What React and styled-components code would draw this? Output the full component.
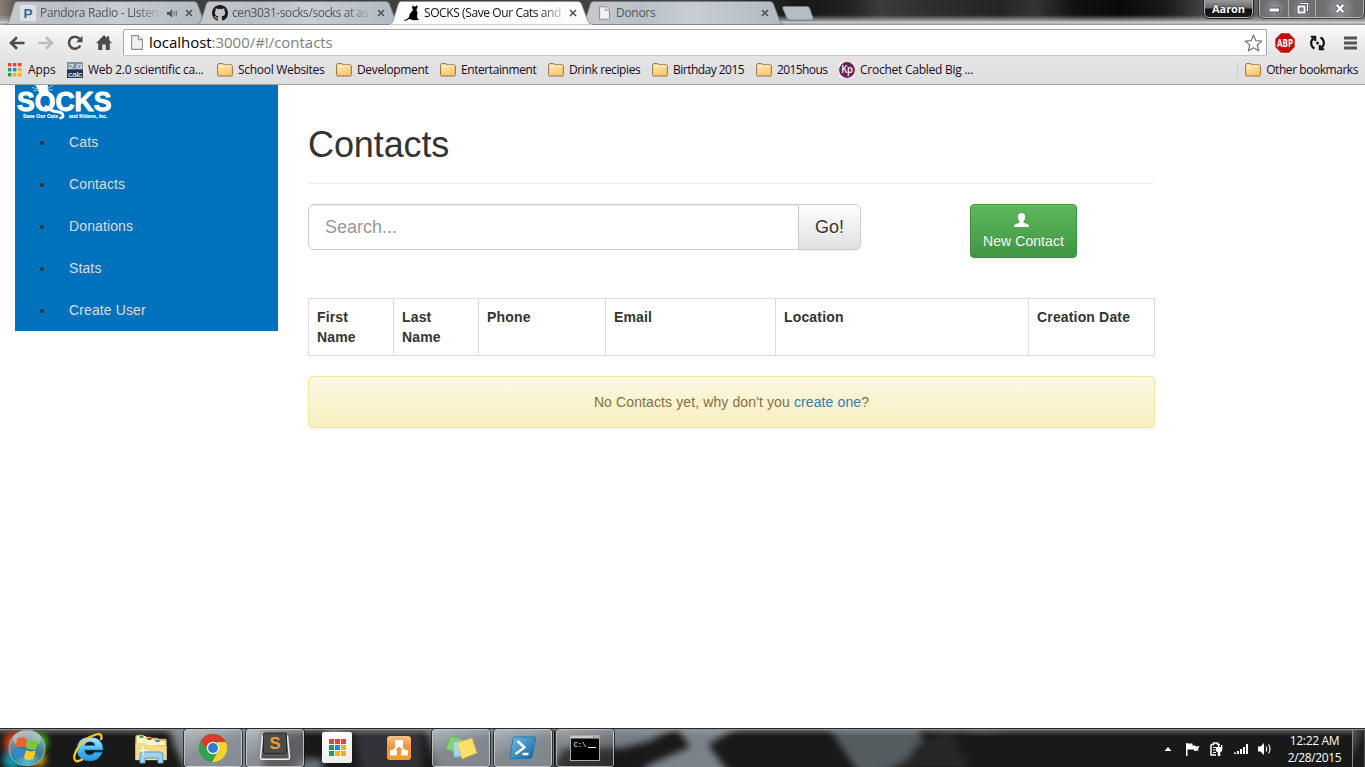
import React from "react";
import styled, { createGlobalStyle, css } from "styled-components";

const GlobalStyle = createGlobalStyle`
  *, *::before, *::after { box-sizing: border-box; }
  html, body { margin: 0; padding: 0; }
  body {
    background: #fff;
    color: #333;
    font: 14px/20px "Liberation Sans", Arial, sans-serif;
    overflow: hidden;
  }
  svg { display: block; flex: none; }
`;

const uiFont = css`
  font-family: "Open Sans", "Noto Sans", sans-serif;
  font-size: 12px;
  line-height: 16px;
  white-space: nowrap;
`;

const Screen = styled.div`
  display: flex;
  flex-direction: column;
  width: 1365px;
  height: 767px;
  overflow: hidden;
`;

/* ---------- title bar and tabs ---------- */

const TitleBar = styled.header`
  ${uiFont}
  position: relative;
  display: flex;
  align-items: flex-start;
  height: 25px;
  padding-left: 8px;
  background:
    linear-gradient(to bottom, transparent 15px, rgba(170, 170, 170, 0.75) 20px, #d6d6d6 23px, #8d8d8d 24px, #a8a8a8 25px),
    linear-gradient(to right, #8a8078 0, #55504c 18px, #3c3c3c 60px, #444 700px, #161616 800px, #222 850px, #3c3c3c 880px, #303030 920px, #242424 1000px, #343434 1035px, #111 1075px, #0a0a0a 1120px, #191919 1165px, #4b4b4b 1210px, #606060 1260px, #646464 1330px, #555 1365px);
`;

const Tab = styled.div`
  position: relative;
  z-index: ${(p) => (p.$active ? 2 : 1)};
  display: flex;
  align-items: center;
  flex: none;
  width: 192px;
  height: 25px;
  padding: 1px 7px 0 12px;
  color: ${(p) => (p.$active ? "#111" : "#555")};
`;

const TabShape = styled.svg`
  position: absolute;
  left: -3px;
  top: 0;
  z-index: -1;
`;

const TabTitle = styled.span`
  margin-left: 4px;
  letter-spacing: ${(p) => p.$track || 0}px;
  mask-image: ${(p) => (p.$fade ? "linear-gradient(to right, #000 calc(100% - 22px), rgba(0, 0, 0, 0.2))" : "none")};
`;

const TabSpacer = styled.span`
  flex: 1;
`;

const TabAudio = styled.span`
  display: flex;
  margin-right: 7px;
`;

const FaviconSlot = styled.span`
  display: flex;
  width: 16px;
  padding-left: 3px;
`;

const NewTab = styled.svg`
  margin: 6px 0 0 5px;
`;

const WindowControls = styled.div`
  display: flex;
  align-items: flex-start;
  margin-left: auto;
`;

const UserBadge = styled.div`
  display: flex;
  justify-content: center;
  width: 49px;
  height: 18px;
  margin-right: 6px;
  border: 1px solid #b6b6b6;
  border-top: 0;
  border-radius: 0 0 5px 5px;
  outline: 1px solid #222;
  background: linear-gradient(#9a9a9a 0, #6a6a6a 8px, #101010 9px, #1d1d1d 100%);
  color: #fff;
  font-size: 11px;
  font-weight: 700;
  line-height: 17px;
  letter-spacing: -0.1px;
  text-shadow: 0 0 2px #000;
`;

const ControlGroup = styled.div`
  display: flex;
  height: 18px;
  margin-right: 1px;
  border: 1px solid #b0b0b0;
  border-top: 0;
  border-radius: 0 0 5px 5px;
  background: rgba(115, 115, 115, 0.75);
  outline: 1px solid rgba(30, 30, 30, 0.6);
`;

const Control = styled.div`
  display: flex;
  align-items: center;
  justify-content: center;
  width: ${(p) => p.$width}px;
  padding-top: ${(p) => p.$drop || 0}px;
  border-right: 1px solid rgba(210, 210, 210, 0.6);
  background: radial-gradient(circle at 50% 50%, rgba(230, 230, 240, 0.35), transparent 65%);
  &:last-child { border-right: 0; }
`;

/* ---------- toolbar ---------- */

const Chrome = styled.div`
  ${uiFont}
  display: flex;
  flex-direction: column;
  height: 60px;
  padding-top: 4px;
  border-bottom: 1px solid #a3a3a3;
  background: linear-gradient(#fbfbfb 0, #f0f0f0 14px, #e4e4e4 32px, #dedede 100%);
`;

const AddressRow = styled.div`
  display: flex;
  align-items: center;
  height: 27px;
  padding-left: 9px;
`;

const NavIcon = styled.span`
  display: flex;
  width: 29px;
`;

const Omnibox = styled.div`
  display: flex;
  align-items: center;
  width: 1144px;
  height: 27px;
  margin-left: -2px;
  padding: 0 3px 0 7px;
  border: 1px solid #a9a9a9;
  border-bottom-color: #c2c2c2;
  border-radius: 2px;
  background: #fff;
`;

const Url = styled.span`
  flex: 1;
  margin: -2px 0 0 6px;
  font-size: 15px;
  line-height: 22px;
  letter-spacing: -0.03px;
  color: #808080;
  b { color: #000; font-weight: 400; }
`;

const ExtIcons = styled.div`
  display: flex;
  align-items: center;
  gap: 15px;
  margin-left: 8px;
`;

const MenuIcon = styled.svg`
  margin-left: 4px;
`;

const Bookmarks = styled.nav`
  display: flex;
  align-items: center;
  height: 28px;
  padding: 0 7px 0 8px;
`;

const Bookmark = styled.div`
  display: flex;
  align-items: center;
  flex: none;
  gap: ${(p) => p.$gap ?? 5}px;
  width: ${(p) => (p.$width ? `${p.$width}px` : "auto")};
  color: #1a0a1a;
  letter-spacing: ${(p) => p.$track || 0}px;
`;

const OtherBookmarks = styled.div`
  display: flex;
  align-items: center;
  height: 16px;
  margin-left: auto;
  padding-left: 7px;
  border-left: 1px solid #c3cdd6;
`;

/* ---------- page ---------- */

const Page = styled.div`
  display: flex;
  flex: 1;
  align-items: flex-start;
  min-height: 0;
  padding-left: 15px;
  overflow: hidden;
`;

const Sidebar = styled.aside`
  width: 263px;
  height: 246px;
  background: #0071bc;
`;

const NavList = styled.ul`
  margin: 0;
  padding: 0 0 0 40px;
  list-style: disc;
`;

const NavItem = styled.li`
  height: 42px;
  padding: 11px 14px;
  line-height: 20px;
  color: #333;
`;

const NavLink = styled.a`
  color: #ddd;
  letter-spacing: 0.12px;
`;

const Main = styled.main`
  width: 847px;
  margin-left: 30px;
`;

const PageHeader = styled.div`
  height: 99px;
  margin-bottom: 20px;
  padding-top: 40px;
  border-bottom: 1px solid #eee;
`;

const Heading = styled.h1`
  margin: 0;
  font-size: 36px;
  font-weight: 400;
  line-height: 39.6px;
  letter-spacing: -0.1px;
`;

const ActionRow = styled.div`
  display: flex;
  align-items: flex-start;
  height: 94px;
`;

const SearchInput = styled.input`
  width: 491px;
  height: 46px;
  padding: 10px 16px;
  border: 1px solid #ccc;
  border-radius: 6px 0 0 6px;
  box-shadow: inset 0 1px 1px rgba(0, 0, 0, 0.075);
  font: 18px/24px "Liberation Sans", Arial, sans-serif;
  &::placeholder { color: #999; opacity: 1; }
`;

const GoButton = styled.button`
  width: 63px;
  height: 46px;
  margin-left: -1px;
  padding: 0;
  border: 1px solid #ccc;
  border-radius: 0 6px 6px 0;
  background: linear-gradient(#fff, #e0e0e0);
  box-shadow: inset 0 1px 0 rgba(255, 255, 255, 0.15), 0 1px 1px rgba(0, 0, 0, 0.075);
  color: #333;
  font: 18px/24px "Liberation Sans", Arial, sans-serif;
  text-shadow: 0 1px 0 #fff;
`;

const NewContact = styled.button`
  display: flex;
  flex-direction: column;
  align-items: center;
  width: 107px;
  height: 54px;
  margin-left: 109px;
  padding: 8px 0 0;
  border: 1px solid #3e8f3e;
  border-radius: 4px;
  background: linear-gradient(#5cb85c, #419641);
  box-shadow: inset 0 1px 0 rgba(255, 255, 255, 0.15), 0 1px 1px rgba(0, 0, 0, 0.075);
  color: #fff;
  font: 14px/20px "Liberation Sans", Arial, sans-serif;
  letter-spacing: 0.08px;
  text-shadow: 0 -1px 0 rgba(0, 0, 0, 0.2);
  white-space: nowrap;
  svg { margin: 0 4px 4px 0; }
`;

const Table = styled.table`
  width: 847px;
  height: 58px;
  border-collapse: collapse;
  table-layout: fixed;
`;

const Th = styled.th`
  width: ${(p) => p.$width}px;
  padding: 8px;
  border: 1px solid #ddd;
  text-align: left;
  vertical-align: top;
  letter-spacing: 0.16px;
`;

const Alert = styled.div`
  height: 52px;
  margin-top: 20px;
  padding: 15px;
  border: 1px solid #f5e79e;
  border-radius: 4px;
  background: linear-gradient(#fcf8e3, #f8efc0);
  box-shadow: inset 0 1px 0 rgba(255, 255, 255, 0.25), 0 1px 2px rgba(0, 0, 0, 0.05);
  color: #8a6d3b;
  text-align: center;
  letter-spacing: 0.115px;
  text-shadow: 0 1px 0 rgba(255, 255, 255, 0.2);
  a { color: #337ab7; }
`;

/* ---------- taskbar ---------- */

const Taskbar = styled.footer`
  ${uiFont}
  position: relative;
  z-index: 0;
  display: flex;
  height: 39px;
  border-top: 1px solid #26282a;
  background: #191919;
  overflow: hidden;
`;

const TaskbarGlass = styled.svg`
  position: absolute;
  left: 0;
  top: 0;
  z-index: -1;
`;

const StartSlot = styled.div`
  width: 60px;
`;

const TaskSlot = styled.div`
  display: flex;
  align-items: center;
  justify-content: center;
  width: 58px;
  height: 38px;
  margin-right: 4px;
  ${(p) =>
    p.$open &&
    css`
      border: 1px solid rgba(225, 225, 225, 0.65);
      border-radius: 3px;
      outline: 1px solid rgba(15, 15, 15, 0.7);
      background: ${p.$dark
        ? "linear-gradient(160deg, rgba(190,190,190,.5), rgba(110,110,110,.35) 50%, rgba(60,60,60,.6))"
        : "linear-gradient(160deg, rgba(215,220,225,.6), rgba(150,155,160,.55) 50%, rgba(140,145,150,.6))"};
      box-shadow: ${p.$stack ? "3px 0 0 -1px #777, 4px 0 0 -1px #151515" : "none"};
    `}
`;

const Tray = styled.div`
  display: flex;
  align-items: center;
  margin-left: auto;
  padding-top: 1px;
`;

const Clock = styled.div`
  width: 75px;
  margin-left: 4px;
  color: #fff;
  line-height: 17px;
  text-align: center;
  letter-spacing: -0.35px;
`;

const ShowDesktop = styled.div`
  width: 13px;
  margin-top: 1px;
  border-left: 1px solid #888;
  border-right: 1px solid #555;
  background: linear-gradient(115deg, #5a5a5a, #1c1c1c 55%);
`;

/* ---------- small drawings ---------- */

const FolderIcon = () => (
  <svg width="16" height="14" viewBox="0 0 16 14">
    <defs>
      <linearGradient id="fold" x1="0" y1="0" x2="0.4" y2="1">
        <stop offset="0" stopColor="#ffeab8" />
        <stop offset="1" stopColor="#fbc870" />
      </linearGradient>
    </defs>
    <path d="M.6 11.800V2.400q0-1.800 1.400-1.800h3.600q1 0 1.300 1.200h7q1.500 0 1.500 1.500v8.500q0 1.200-1.200 1.200H1.800Q.6 13 .6 11.800z" fill="url(#fold)" stroke="#96703d" strokeWidth="1" />
    <path d="M1.500 3.800h4.800l1-1h7" fill="none" stroke="#fff5d8" />
  </svg>
);

const PageIcon = ({ w = 12, h = 15 }) => (
  <svg width={w} height={h} viewBox="0 0 12 15">
    <path d="M.6.6h6.800l4 4v9.800H.6z" fill="#f1f1f1" stroke="#909090" strokeWidth="1.1" />
    <path d="M7.400.6v4h4" fill="#fff" stroke="#909090" strokeWidth="1.1" />
  </svg>
);

const CloseIcon = () => (
  <svg width="8" height="8" viewBox="0 0 8 8">
    <path d="M1 1l6 6M7 1L1 7" stroke="#555" strokeWidth="1.7" />
  </svg>
);

const DotGrid = ({ size, dot, step }) => {
  const colors = ["#ea4335", "#ea4335", "#ea4335", "#1a9f56", "#1a8be8", "#f4b400", "#1a9f56", "#f4b400", "#f4b400"];
  return (
    <svg width={size} height={size}>
      {colors.map((c, i) => (
        <rect key={i} x={(i % 3) * step} y={Math.floor(i / 3) * step} width={dot} height={dot} fill={c} />
      ))}
    </svg>
  );
};

const PandoraIcon = () => (
  <svg width="16" height="16" viewBox="0 0 16 16">
    <rect width="16" height="16" rx="1.5" fill="#dfe3e8" />
    <text x="3.400" y="12.600" fontFamily="Liberation Sans, sans-serif" fontWeight="700" fontSize="13.500" fill="#2b6699">P</text>
  </svg>
);

const GithubIcon = () => (
  <svg width="16" height="16" viewBox="0 0 16 16">
    <path fill="#1b1b1b" d="M8 0C3.58 0 0 3.58 0 8c0 3.54 2.29 6.53 5.47 7.59.4.07.55-.17.55-.38 0-.19-.01-.82-.01-1.49-2.01.37-2.53-.49-2.69-.94-.09-.23-.48-.94-.82-1.13-.28-.15-.68-.52-.01-.53.63-.01 1.08.58 1.23.82.72 1.21 1.87.87 2.33.66.07-.52.28-.87.51-1.07-1.78-.2-3.64-.89-3.64-3.95 0-.87.31-1.59.82-2.15-.08-.2-.36-1.02.08-2.12 0 0 .67-.21 2.2.82a7.6 7.6 0 0 1 4 0c1.53-1.04 2.2-.82 2.2-.82.44 1.1.16 1.92.08 2.12.51.56.82 1.27.82 2.15 0 3.07-1.87 3.75-3.65 3.95.29.25.54.73.54 1.48 0 1.07-.01 1.93-.01 2.2 0 .21.15.46.55.38A8 8 0 0 0 16 8c0-4.42-3.58-8-8-8z" />
  </svg>
);

const CatIcon = () => (
  <svg width="16" height="16" viewBox="0 0 16 16">
    <path d="M8.600.2l1.300 1.200h1.700L13.200.1l.3 2.700-1.100 1.800 1.100 3.200-.4 3.800.4 2 1.300.6-.2.900-5.400.1-3.300-1.200q-1.700.1-2.600 1.100-1.300 1.200-3.100.5l.1-1.100q1.500.5 2.900-.7l1.600-1.300Q5.400 8.600 7.300 7.100q1.500-1.200 1.600-2.800L8.100 2.900z" fill="#000" />
  </svg>
);

const AudioIcon = () => (
  <svg width="11" height="9" viewBox="0 0 11 9">
    <path d="M0 3h2.200L5.200.300v8.400L2.200 6H0z" fill="#555" />
    <path d="M7 2.500v4M9.300 1.500v6" stroke="#666" strokeWidth="1" />
  </svg>
);

const tabPath = (w) => `M0 24.500Q3 24 4 21L9.500 3.500Q10.300 1.500 12.500 1.500H${w - 15}Q${w - 12.5} 1.500 ${w - 11.5} 4L${w - 5} 21.500Q${w - 4} 24 ${w - 1} 24.500z`;

const BrowserTab = ({ active, icon, title, audio, fade, track }) => (
  <Tab $active={active}>
    <TabShape width="208" height="26" viewBox="0 0 208 26">
      <defs>
        <linearGradient id="tabOff" x1="0" y1="0" x2="1" y2="0">
          <stop offset="0" stopColor="#c7c9cb" />
          <stop offset="0.3" stopColor="#b9c0c9" />
          <stop offset="0.55" stopColor="#c9ced4" />
          <stop offset="1" stopColor="#b1b8c1" />
        </linearGradient>
        <linearGradient id="tabOn" x1="0" y1="0" x2="0" y2="1">
          <stop offset="0" stopColor="#fff" />
          <stop offset="1" stopColor="#fbfbfb" />
        </linearGradient>
      </defs>
      <path d={tabPath(204)} fill={active ? "url(#tabOn)" : "url(#tabOff)"} stroke={active ? "#909090" : "#777a7e"} strokeWidth="0.8" />
      {active && <path d="M1 25.200H203" stroke="#fbfbfb" strokeWidth="1.400" />}
    </TabShape>
    {icon}
    <TabTitle $fade={fade} $track={track}>{title}</TabTitle>
    <TabSpacer />
    {audio && <TabAudio><AudioIcon /></TabAudio>}
    <CloseIcon />
  </Tab>
);

const CalcIcon = () => (
  <svg width="16" height="16" viewBox="0 0 16 16">
    <rect width="16" height="16" fill="#263545" />
    <rect width="16" height="7.500" fill="#8295a5" />
    <text x="1" y="6.700" fontSize="8" textLength="14" lengthAdjust="spacingAndGlyphs" fontFamily="Liberation Sans, sans-serif" fill="#fff">2.0</text>
    <text x="1" y="14.500" fontSize="8" textLength="14" lengthAdjust="spacingAndGlyphs" fontFamily="Liberation Sans, sans-serif" fill="#fff">calc</text>
  </svg>
);

const KpIcon = () => (
  <svg width="16" height="16" viewBox="0 0 16 16">
    <rect width="16" height="16" fill="#f6eef4" />
    <circle cx="8" cy="8" r="7.900" fill="#6d1f5c" />
    <text x="2.300" y="11.200" fontSize="10" fontWeight="600" textLength="11.500" lengthAdjust="spacingAndGlyphs" fontFamily="Open Sans, sans-serif" fill="#fff">Kp</text>
  </svg>
);

const SocksLogo = () => (
  <svg width="110" height="36" viewBox="0 0 110 36">
    <g fill="#fff" fontFamily="Liberation Sans, sans-serif" fontWeight="700">
      <path d="M20 0h13l-.5 4.500 2.500 3-5 2-6.500-2-.5-3.500z" />
      <path d="M17 2.500l6 1.500M18 6l5-1M38 .5l-6 3M38 5l-6-.5" stroke="#fff" strokeWidth=".6" />
      <text x="2" y="26" fontSize="27.500" textLength="94.500" lengthAdjust="spacingAndGlyphs" stroke="#fff" strokeWidth="1" strokeLinejoin="round">SOCKS</text>
      <path d="M31 21.500q4 4.500 10 5 7 .8 7 4 0 2-2.500 2.500" fill="none" stroke="#fff" strokeWidth="2.800" strokeLinecap="round" />
      <text x="8" y="32.700" fontSize="6" textLength="35" lengthAdjust="spacingAndGlyphs" stroke="#fff" strokeWidth=".15">Save Our Cats</text>
      <text x="54" y="32.700" fontSize="6" textLength="38.500" lengthAdjust="spacingAndGlyphs" stroke="#fff" strokeWidth=".15">and Kittens, Inc.</text>
    </g>
  </svg>
);

/* ---------- taskbar drawings ---------- */

const StartOrb = () => (
  <svg width="60" height="38" viewBox="0 0 60 38">
    <defs>
      <radialGradient id="orb" cx=".5" cy=".9" r=".9">
        <stop offset="0" stopColor="#5bd8e8" />
        <stop offset=".45" stopColor="#2a7da4" />
        <stop offset="1" stopColor="#a9b8be" />
      </radialGradient>
      <filter id="glow" x="-50%" y="-50%" width="200%" height="200%"><feGaussianBlur stdDeviation="3.200" /></filter>
    </defs>
    <g filter="url(#glow)">
      <circle cx="14" cy="13" r="10" fill="#d83c14" />
      <circle cx="39" cy="13" r="9" fill="#3fae23" />
      <circle cx="13" cy="31" r="10" fill="#1993a8" />
      <circle cx="38" cy="30" r="8" fill="#bd941b" />
    </g>
    <circle cx="27" cy="19" r="18" fill="url(#orb)" stroke="#b6c6c9" strokeWidth=".8" opacity=".85" />
    <ellipse cx="27" cy="10" rx="14" ry="8" fill="#fff" opacity=".32" />
    <g transform="translate(0 -1)">
      <path d="M17.500 10.500q5-2.500 9.500.5l-2 9q-5-2.500-9.800-.5z" fill="#f0622a" />
      <path d="M28.300 11.500q5 2.600 10.200.3l-2.400 9.100q-5 2-10-.6z" fill="#83c23d" />
      <path d="M15 21q5-2.200 9.800.4l-2.200 8.500q-5-2.400-9.600-.5z" fill="#3188cf" />
      <path d="M25.900 22q5 2.500 9.900.6l-2.300 8.500q-5 2-9.700-.7z" fill="#fdc72d" />
    </g>
  </svg>
);

const IEIcon = () => (
  <svg width="34" height="32" viewBox="0 0 34 32">
    <defs>
      <linearGradient id="ie" x1="0" y1="0" x2="0" y2="1">
        <stop offset="0" stopColor="#b9efff" />
        <stop offset=".5" stopColor="#49bdf2" />
        <stop offset="1" stopColor="#2393dd" />
      </linearGradient>
    </defs>
    <path d="M31 18H12.500q.5 5 5.300 5 3.200 0 4.700-2.800h7.800Q27 29 17.800 29 5 28.500 5 17 5.500 5.500 17.500 5.200 31 5.200 31 18zM23 13.500q-.5-3.800-4.900-3.800-4.600 0-5.500 3.800z" fill="url(#ie)" stroke="#1674bd" strokeWidth=".6" />
    <path d="M29 8Q31 1 24 2.500 12 6 5 17 0 27 4 29q2 1 7-2" fill="none" stroke="#f7c62c" strokeWidth="2.300" />
  </svg>
);

const ExplorerIcon = () => (
  <svg width="34" height="32" viewBox="0 0 34 32">
    <path d="M1.500 5q0-2 2-2h6l1 2h6l1 1h6l1 1h7q1 0 1 2v19h-31z" fill="#e3c872" stroke="#b8953f" strokeWidth=".5" />
    <path d="M3 4h9v3h8v2h11v4H3z" fill="#fff4cc" />
    <path d="M5.500 4h4v2h-4z" fill="#37a548" />
    <path d="M13.500 6h4v2h-4z" fill="#c33" />
    <path d="M21.500 8h4v2h-4z" fill="#278ecb" />
    <path d="M1.500 11h9l2 2h8l1.500 1.500h10.500V28h-31z" fill="#f2db8e" />
    <path d="M6 31V23q0-3 3-3h17q3 0 3 3v8h-5v-5H11v5z" fill="#a0d3ef" stroke="#5c9cc3" />
    <path d="M9 14v9M4.500 18.500h9" stroke="#fff" strokeWidth="1" />
  </svg>
);

const ChromeIcon = () => (
  <svg width="30" height="30" viewBox="0 0 30 30">
    <circle cx="15" cy="15" r="14.200" fill="#31a350" />
    <path d="M2.700 8A14.200 14.200 0 0 1 27.800 9H15a6 6 0 0 0-5.700 4.500L8.600 16z" fill="#dc3b2c" />
    <path d="M27.800 9A14.200 14.200 0 0 1 14 29.200L20.200 18Q22 14 19 9z" fill="#fbd031" />
    <circle cx="15" cy="15" r="6.300" fill="#f4f4f4" />
    <circle cx="15" cy="15" r="4.900" fill="#3478c9" />
  </svg>
);

const SublimeIcon = () => (
  <svg width="32" height="32" viewBox="0 0 32 32">
    <path d="M3.500 4L1.500 26q0 1.300 1.300 1.300h26.400q1.300 0 1.300-1.300L28.500 4z" fill="#555" stroke="#f2f2f2" strokeWidth="1.500" />
    <rect x="4.500" y="1" width="23" height="20.500" rx="1.500" fill="#4b4b4b" stroke="#282828" />
    <text x="10.500" y="17" fontSize="16.500" fontWeight="700" fontFamily="Liberation Sans, sans-serif" fill="#f59b35">S</text>
  </svg>
);

const AppsTile = styled.div`
  display: flex;
  align-items: center;
  justify-content: center;
  width: 30px;
  height: 31px;
  margin-bottom: 2px;
  border-radius: 2px;
  background: linear-gradient(#fff, #ededed);
`;

const VmIcon = () => (
  <svg width="24" height="24" viewBox="0 0 24 24">
    <defs>
      <linearGradient id="vm" x1="0" y1="0" x2="0" y2="1">
        <stop offset="0" stopColor="#f7c08d" />
        <stop offset=".5" stopColor="#f0913b" />
        <stop offset="1" stopColor="#f7a022" />
      </linearGradient>
    </defs>
    <rect width="24" height="24" rx="3" fill="url(#vm)" />
    <path d="M8 4h8v7H8zM3 14h7v5.500H3zM14 14h7v5.500h-7z" fill="#fff" />
    <path d="M11 10l-5 5M13 10l5 5" stroke="#fff" strokeWidth="2" />
  </svg>
);

const NotesIcon = () => (
  <svg width="34" height="28" viewBox="0 0 34 28">
    <path d="M7 2l13 4-5 14L2 15z" fill="#83d46b" stroke="#5fae52" strokeWidth=".5" />
    <path d="M9 8l13-2 3 16-15 1z" fill="#a5d6f8" stroke="#6ba9d8" strokeWidth=".5" />
    <path d="M13 9l15-5 5 15-15 6z" fill="#fbe069" stroke="#d6b13c" strokeWidth=".5" />
  </svg>
);

const PowerShellIcon = () => (
  <svg width="30" height="24" viewBox="0 0 30 24">
    <defs>
      <linearGradient id="ps" x1="0" y1="0" x2="1" y2="1">
        <stop offset="0" stopColor="#74bfe6" />
        <stop offset="1" stopColor="#10609f" />
      </linearGradient>
    </defs>
    <path d="M6.500 1h20q1.500 0 1.200 1.500L24 21q-.4 1.500-2 1.500H3q-1.500 0-1.200-1.500L5 2.300Q5.300 1 6.500 1z" fill="url(#ps)" stroke="#2476ae" />
    <path d="M9.500 5l7 6.500-9 6.500M14.500 18h6" fill="none" stroke="#fff" strokeWidth="2.400" />
  </svg>
);

const CmdIcon = () => (
  <svg width="30" height="26" viewBox="0 0 30 26">
    <rect x=".5" y=".5" width="29" height="25" fill="#000" stroke="#aaa" />
    <rect x="1" y="1" width="28" height="2.500" fill="#c9c9c9" />
    <path d="M23 2h1M25.500 2h1M28 2h.6" stroke="#444" />
    <text x="3.500" y="12" fontSize="8" fontFamily="Liberation Mono, monospace" fill="#eee" textLength="13">C:\</text>
    <path d="M18 12.500h8" stroke="#eee" strokeWidth="1" />
  </svg>
);

const TrayIcons = () => (
  <svg width="110" height="20" viewBox="1163 739 110 20" fill="#fff">
    <path d="M1164.500 751l3.500-4 3.500 4z" />
    <path d="M1186 743h1.500v13h-1.500zM1187.500 743.500h5v2h2.500l1 1 3.500-.5-1.500 3 .5 1.500-4 .5-1-1.500h-6z" />
    <path d="M1211 744.500h2.500v-1.500h4v1.500h2.500M1211 744.500v10.500h5" fill="none" stroke="#fff" strokeWidth="1.500" />
    <path d="M1213 747.500h3.500M1213 750h2.500M1213 752.500h3" stroke="#fff" />
    <path d="M1216 747h2v-2h1.300v2h1.700v-2h1.300v2v3q0 2-2 2v4h-2.500v-4q-2 0-2-2z" />
    <path d="M1234 752.500h2v1.500h-2zM1237 751h2v3h-2zM1240 749h2v5h-2zM1243 747h2v7h-2zM1246 744h2v10h-2z" />
    <path d="M1258 746.500h2.500l3.500-3.500v12l-3.500-3.500h-2.500z" />
    <path d="M1266 746.500q1.500 2.500 0 5M1268.500 744.500q3 4.500 0 9" fill="none" stroke="#fff" strokeWidth="1.100" />
  </svg>
);

const Glass = () => (
  <TaskbarGlass width="1365" height="38" viewBox="0 729 1365 38">
    <defs>
      <filter id="soft" x="-5%" y="-50%" width="110%" height="200%"><feGaussianBlur stdDeviation="3.500" /></filter>
      <linearGradient id="edge" x1="0" y1="0" x2="0" y2="1">
        <stop offset="0" stopColor="#aaa" stopOpacity=".55" />
        <stop offset="1" stopColor="#aaa" stopOpacity="0" />
      </linearGradient>
    </defs>
    <rect y="729" width="1365" height="38" fill="#191919" />
    <g filter="url(#soft)">
      <path d="M168 725h95v50h-75l-14-30z" fill="#7b838b" />
      <path d="M300 759h22v14h-30zM325 725h28l-22 14z" fill="#69727a" />
      <path d="M352 725h70v50h-60z" fill="#303338" />
      <path d="M425 725h130l10 20-15 30H440z" fill="#6d747a" />
      <path d="M555 725h125l-30 16-28 7h-60z" fill="#777f87" />
      <path d="M675 725h65l-32 20 24 32h-94l10-12 42-18z" fill="#7b838b" />
      <path d="M827 725h90l8 22-32 22-30 10z" fill="#555b61" />
      <path d="M940 725h70l-22 8z" fill="#34373a" />
      <path d="M915 745l35-15 22 40h-70z" fill="#272727" />
    </g>
    <rect y="729" width="1365" height="7" fill="url(#edge)" />
    <rect y="729" width="1365" height="1" fill="#8f9193" />
  </TaskbarGlass>
);

/* ---------- data ---------- */

const folders = [
  ["School Websites", 119, -0.3],
  ["Development", 104, -0.35],
  ["Entertainment", 108, -0.42],
  ["Drink recipies", 104, -0.38],
  ["Birthday 2015", 104, -0.52],
  ["2015hous", 83, -0.6],
];
const navItems = ["Cats", "Contacts", "Donations", "Stats", "Create User"];
const columns = [["First Name", 85], ["Last Name", 85], ["Phone", 127], ["Email", 170], ["Location", 253], ["Creation Date", 126]];

const WindowButtons = () => (
  <ControlGroup>
    <Control $width={29} $drop={3}>
      <svg width="13" height="6"><rect x="1" y="1" width="10.500" height="4" fill="#fff" stroke="#555b72" /></svg>
    </Control>
    <Control $width={27}>
      <svg width="13" height="13" viewBox="0 0 13 13">
        <path d="M4.500 1.500h7v7h-2" fill="none" stroke="#50566c" strokeWidth="2.400" />
        <path d="M4.500 1.500h7v7h-2" fill="none" stroke="#fff" strokeWidth="1.200" />
        <rect x="2.500" y="4.500" width="6" height="6" fill="none" stroke="#50566c" strokeWidth="3.600" />
        <rect x="2.500" y="4.500" width="6" height="6" fill="none" stroke="#fff" strokeWidth="2" />
      </svg>
    </Control>
    <Control $width={47}>
      <svg width="12" height="11" viewBox="0 0 12 11">
        <path d="M2.500 1.500l7 8M9.500 1.500l-7 8" stroke="#50566c" strokeWidth="4" />
        <path d="M2.800 1.800l6.500 7.400M9.300 1.800L2.800 9.200" stroke="#fff" strokeWidth="2.400" />
      </svg>
    </Control>
  </ControlGroup>
);

export default function App() {
  return (
    <Screen>
      <GlobalStyle />
      <TitleBar>
        <BrowserTab icon={<PandoraIcon />} title="Pandora Radio - Listen" track={-0.32} audio fade />
        <BrowserTab icon={<GithubIcon />} title="cen3031-socks/socks at as" track={-0.42} fade />
        <BrowserTab active icon={<CatIcon />} title="SOCKS (Save Our Cats and" track={-0.4} fade />
        <BrowserTab icon={<FaviconSlot><PageIcon w={11} h={14} /></FaviconSlot>} title="Donors" track={-0.3} />
        <NewTab width="33" height="15" viewBox="0 0 33 15">
          <path d="M3 .5h23q2 0 2.800 2l3 9q.8 2.500-1.500 2.500H9q-2.500 0-3.300-2.300L1.800 2.500Q1.200.5 3 .5z" fill="#b5bcc5" stroke="#7b7f84" strokeWidth=".8" />
        </NewTab>
        <WindowControls>
          <UserBadge>Aaron</UserBadge>
          <WindowButtons />
        </WindowControls>
      </TitleBar>

      <Chrome>
        <AddressRow>
          <NavIcon>
            <svg width="16" height="14" viewBox="0 0 16 14"><path d="M15.500 7H3M8 1.200L2 7l6 5.800" fill="none" stroke="#4c4c4c" strokeWidth="2.600" /></svg>
          </NavIcon>
          <NavIcon>
            <svg width="16" height="14" viewBox="0 0 16 14"><path d="M.5 7H13M8 1.200L14 7l-6 5.800" fill="none" stroke="#bdbdbd" strokeWidth="2.600" /></svg>
          </NavIcon>
          <NavIcon>
            <svg width="17" height="16" viewBox="0 0 17 16">
              <path d="M13.300 10.500A6 6 0 1 1 12.500 3.800" fill="none" stroke="#4c4c4c" strokeWidth="2.600" />
              <path d="M15.500.8V7.300H9z" fill="#4c4c4c" />
            </svg>
          </NavIcon>
          <NavIcon>
            <svg width="16" height="15" viewBox="0 0 16 15">
              <path d="M8 0l3 3V1.200h2.200V5L16 8.200H13.800V15H9.700V9.500H6.300V15H2.200V8.200H0z" fill="#4c4c4c" />
            </svg>
          </NavIcon>
          <Omnibox>
            <PageIcon />
            <Url><b>localhost</b>:3000/#!/contacts</Url>
            <svg width="19" height="18" viewBox="0 0 19 18">
              <path d="M9.500 1l2.300 5.700 6.100.4-4.700 3.900 1.500 6-5.200-3.300L4.300 17l1.500-6L1.100 7.100l6.100-.4z" fill="#fff" stroke="#777" strokeWidth="1.200" strokeLinejoin="round" />
            </svg>
          </Omnibox>
          <ExtIcons>
            <svg width="20" height="20" viewBox="0 0 20 20">
              <path d="M6 .3h8L19.700 6v8L14 19.700H6L.3 14V6z" fill="#c70d0d" />
              <text x="2" y="14" textLength="16" lengthAdjust="spacingAndGlyphs" fontSize="11" fontWeight="700" fontFamily="Open Sans, sans-serif" fill="#fff">ABP</text>
            </svg>
            <svg width="15" height="16" viewBox="0 0 15 16" fill="none" stroke="#111" strokeWidth="2.100">
              <path d="M4.500 13.500A6 6 0 0 1 4 3M10.500 2.500A6 6 0 0 1 11 13" />
              <path d="M.8 1.800h4.400v4.200M14.200 14.200H9.800V10" />
              <circle cx="7.500" cy="8" r="1.500" fill="#111" stroke="none" />
            </svg>
            <MenuIcon width="13" height="14" viewBox="0 0 13 14">
              <path d="M0 2h13M0 7h13M0 12h13" stroke="#555" strokeWidth="2.800" />
            </MenuIcon>
          </ExtIcons>
        </AddressRow>
        <Bookmarks>
          <Bookmark $width={59} $gap={6} $track={-0.1}><DotGrid size={14} dot={3.4} step={5} />Apps</Bookmark>
          <Bookmark $width={150} $track={-0.27}><CalcIcon />Web 2.0 scientific ca...</Bookmark>
          {folders.map(([name, width, track]) => (
            <Bookmark key={name} $width={width} $track={track}><FolderIcon />{name}</Bookmark>
          ))}
          <Bookmark $track={-0.25}><KpIcon />Crochet Cabled Big ...</Bookmark>
          <OtherBookmarks><Bookmark $track={-0.45}><FolderIcon />Other bookmarks</Bookmark></OtherBookmarks>
        </Bookmarks>
      </Chrome>

      <Page>
        <Sidebar>
          <SocksLogo />
          <NavList>
            {navItems.map((item) => (
              <NavItem key={item}><NavLink>{item}</NavLink></NavItem>
            ))}
          </NavList>
        </Sidebar>
        <Main>
          <PageHeader><Heading>Contacts</Heading></PageHeader>
          <ActionRow>
            <SearchInput placeholder="Search..." />
            <GoButton>Go!</GoButton>
            <NewContact>
              <svg width="15" height="14" viewBox="0 0 15 14">
                <path d="M7.500 0C10 0 11.200 1.600 11.200 3.800c0 1.800-.6 3.300-1.700 4.200v1.500c.5.700 5.300 1.500 5.300 3.200V14H.2v-1.300c0-1.700 4.800-2.500 5.300-3.200V8C4.400 7.100 3.800 5.600 3.800 3.800 3.800 1.600 5 0 7.500 0z" fill="#fff" />
              </svg>
              New Contact
            </NewContact>
          </ActionRow>
          <Table>
            <thead>
              <tr>{columns.map(([name, width]) => <Th key={name} $width={width}>{name}</Th>)}</tr>
            </thead>
          </Table>
          <Alert>No Contacts yet, why don't you <a>create one</a>?</Alert>
        </Main>
      </Page>

      <Taskbar>
        <Glass />
        <StartSlot><StartOrb /></StartSlot>
        <TaskSlot><IEIcon /></TaskSlot>
        <TaskSlot><ExplorerIcon /></TaskSlot>
        <TaskSlot $open><ChromeIcon /></TaskSlot>
        <TaskSlot $open><SublimeIcon /></TaskSlot>
        <TaskSlot><AppsTile><DotGrid size={17} dot={5} step={6} /></AppsTile></TaskSlot>
        <TaskSlot><VmIcon /></TaskSlot>
        <TaskSlot $open><NotesIcon /></TaskSlot>
        <TaskSlot $open $stack><PowerShellIcon /></TaskSlot>
        <TaskSlot $open $dark><CmdIcon /></TaskSlot>
        <Tray>
          <TrayIcons />
          <Clock>12:22 AM<br />2/28/2015</Clock>
        </Tray>
        <ShowDesktop />
      </Taskbar>
    </Screen>
  );
}
